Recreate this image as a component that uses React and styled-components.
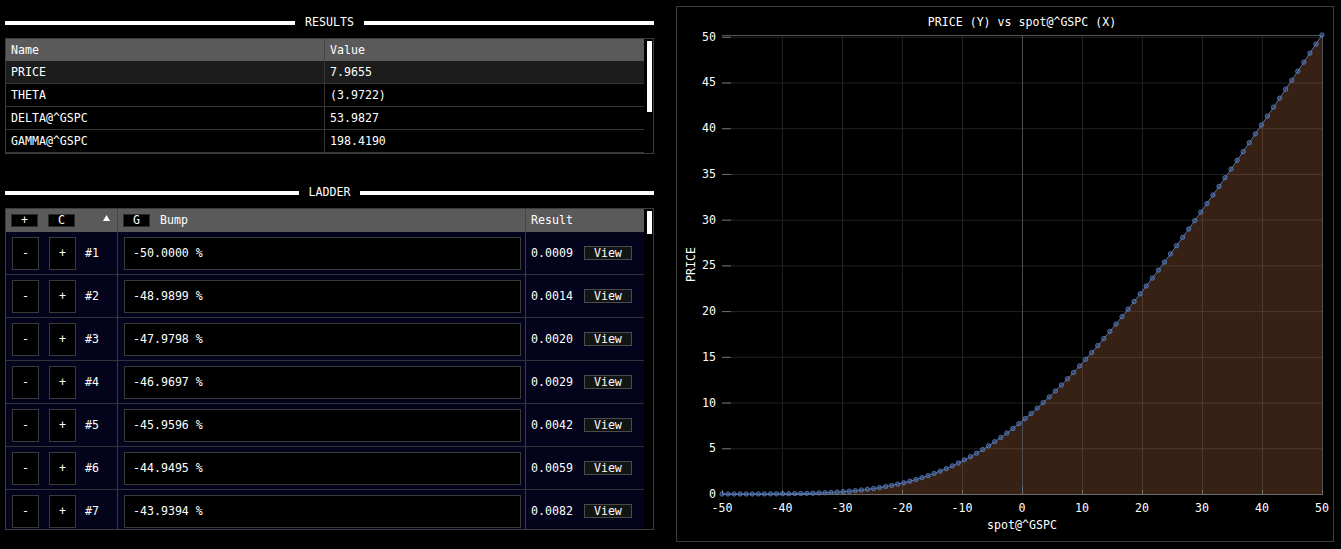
import React from 'react';
import styled, { createGlobalStyle } from 'styled-components';

const GlobalStyle = createGlobalStyle`
  html, body {
    margin: 0;
    background: #000;
  }
  body {
    font-family: "DejaVu Sans Mono", "Liberation Mono", monospace;
    font-size: 11.6px;
    line-height: 13px;
    color: #fff;
  }
`;

const S = {
  Page: styled.div`
    display: flex;
    align-items: flex-start;
    gap: 22px;
    padding: 6px 0 0 5px;
  `,
  LeftCol: styled.div`
    width: 649px;
    padding-top: 10px;
    display: flex;
    flex-direction: column;
  `,
  Separator: styled.div`
    display: flex;
    align-items: center;
    gap: 10px;
    height: 13px;
    margin-top: ${p => p.$top || 0}px;
    margin-bottom: 9px;
    &::before,
    &::after {
      content: '';
      flex: 1;
      height: 4px;
      background: #fff;
    }
  `,
  Frame: styled.div`
    box-sizing: border-box;
    height: ${p => p.$height}px;
    border: 1px solid #3c3c3c;
    display: flex;
    overflow: hidden;
  `,
  Table: styled.div`
    width: 638px;
    display: flex;
    flex-direction: column;
  `,
  Track: styled.div`
    width: 9px;
    padding: 2px 0 0 3px;
    box-sizing: border-box;
  `,
  Thumb: styled.div`
    width: 5px;
    height: ${p => p.$height}px;
    background: #fff;
  `,
  ResHead: styled.div`
    display: grid;
    grid-template-columns: 319px 1fr;
    height: 22px;
    background: #5a5a5a;
  `,
  ResRow: styled.div`
    display: grid;
    grid-template-columns: 319px 1fr;
    height: 23px;
    box-sizing: border-box;
    border-bottom: 1px solid #353535;
    background: ${p => (p.$active ? '#1c1c1c' : '#000')};
  `,
  ResCell: styled.div`
    padding: 1px 0 0 5px;
    display: flex;
    align-items: center;
    white-space: pre;
    &:first-child {
      border-right: 1px solid ${p => (p.$head ? '#454545' : '#353535')};
    }
  `,
  LadHead: styled.div`
    display: grid;
    grid-template-columns: 112px 408px 1fr;
    height: 23px;
    flex-shrink: 0;
    background: #5a5a5a;
  `,
  LadRow: styled.div`
    display: grid;
    grid-template-columns: 112px 408px 1fr;
    height: 43px;
    flex-shrink: 0;
    box-sizing: border-box;
    border-bottom: 1px solid #33333d;
    background: #03031b;
  `,
  Cell: styled.div`
    display: flex;
    align-items: center;
    gap: ${p => p.$gap || 0}px;
    padding: ${p => p.$pad || '0 0 0 5px'};
    border-right: ${p => (p.$last ? 'none' : `1px solid ${p.$head ? '#454545' : '#3a3a3a'}`)};
    min-width: 0;
  `,
  HeadButton: styled.button`
    box-sizing: border-box;
    width: 27px;
    height: 13px;
    padding: 0;
    border: 1px solid #2c2c2c;
    background: #000;
    color: #fff;
    font: inherit;
    line-height: 11px;
  `,
  SortArrow: styled.svg`
    margin-left: auto;
    margin-right: 7px;
    margin-bottom: 6px;
  `,
  RowButton: styled.button`
    box-sizing: border-box;
    width: 27px;
    height: 33px;
    padding: 0;
    border: 1px solid #3a3a3a;
    background: #000;
    color: #fff;
    font: inherit;
  `,
  Index: styled.span`
    margin-left: -1px;
  `,
  Field: styled.input`
    box-sizing: border-box;
    width: 100%;
    height: 33px;
    margin: 0;
    padding: 0 0 0 8px;
    border: 1px solid #3a3a3a;
    background: #000;
    color: #fff;
    font: inherit;
    outline: none;
  `,
  ViewButton: styled.button`
    box-sizing: border-box;
    width: 48px;
    height: 14px;
    margin-left: 11px;
    padding: 0;
    border: 1px solid #4a4a4a;
    background: #141414;
    color: #fff;
    font: inherit;
    line-height: 12px;
  `,
  ChartPanel: styled.div`
    box-sizing: border-box;
    width: 658px;
    height: 536px;
    border: 1px solid #3c3c3c;
    display: flex;
    flex-direction: column;
  `,
  ChartTitle: styled.div`
    margin-top: 9px;
    padding-left: 34px;
    text-align: center;
    white-space: pre;
  `,
  ChartBody: styled.div`
    display: flex;
    align-items: center;
  `,
  YLabel: styled.div`
    width: 13px;
    margin: 0 0 20px 8px;
    writing-mode: vertical-rl;
    transform: rotate(180deg);
  `,
  Plot: styled.svg`
    display: block;
    margin-left: 2px;
    font-family: "DejaVu Sans Mono", "Liberation Mono", monospace;
    font-size: 11.6px;
  `,
  XLabel: styled.div`
    padding-left: 34px;
    text-align: center;
  `,
};

const results = [
  { name: 'PRICE', value: '7.9655', active: true },
  { name: 'THETA', value: '(3.9722)' },
  { name: 'DELTA@^GSPC', value: '53.9827' },
  { name: 'GAMMA@^GSPC', value: '198.4190' },
];

const ladderResults = ['0.0009', '0.0014', '0.0020', '0.0029', '0.0042', '0.0059', '0.0082'];
const ladder = ladderResults.map((res, i) => ({
  id: i + 1,
  bump: (-50 + (i * 100) / 99).toFixed(4),
  res,
}));

// black-scholes call, spot bumped by x %, atm strike, vol*sqrt(t) = 0.2
const erf = x => {
  const s = Math.sign(x);
  const a = Math.abs(x);
  const t = 1 / (1 + 0.3275911 * a);
  const y = 1 - (((((1.061405429 * t - 1.453152027) * t) + 1.421413741) * t - 0.284496736) * t + 0.254829592) * t * Math.exp(-a * a);
  return s * y;
};
const ncdf = x => 0.5 * (1 + erf(x / Math.SQRT2));
const callPrice = bump => {
  const spot = 100 * (1 + bump / 100);
  const v = 0.2;
  const d1 = Math.log(spot / 100) / v + v / 2;
  return spot * ncdf(d1) - 100 * ncdf(d1 - v);
};

const points = Array.from({ length: 100 }, (_, i) => {
  const x = -50 + (i * 100) / 99;
  return { x, y: callPrice(x) };
});

const PL = 22;
const PT = 6;
const PW = 600;
const PH = 459;
const yMin = Math.min(...points.map(p => p.y));
const yMax = Math.max(...points.map(p => p.y));
const px = x => PL + ((x + 50) / 100) * PW;
const py = y => PT + PH - ((y - yMin) / (yMax - yMin)) * PH;
const bottom = PT + PH;

const xTicks = [-50, -40, -30, -20, -10, 0, 10, 20, 30, 40, 50];
const yTicks = [0, 5, 10, 15, 20, 25, 30, 35, 40, 45, 50];

const Chart = () => {
  const line = points.map(p => `${px(p.x).toFixed(1)},${py(p.y).toFixed(1)}`).join(' ');
  const area = `${px(-50)},${py(0)} ${line} ${px(50)},${py(0)}`;
  return (
    <S.Plot width="632" height="490">
      {xTicks.slice(1, -1).map(t => (
        <line key={`gx${t}`} x1={px(t) + 0.5} x2={px(t) + 0.5} y1={PT} y2={bottom} stroke="#222" />
      ))}
      {yTicks.slice(1).map(t => (
        <line key={`gy${t}`} x1={PL} x2={PL + PW} y1={py(t) + 0.5} y2={py(t) + 0.5} stroke="#222" />
      ))}
      <polygon points={area} fill="rgba(221,132,82,0.25)" />
      <line x1={px(0) + 0.5} x2={px(0) + 0.5} y1={PT} y2={bottom} stroke="#4e4e4e" />
      <line x1={px(0) + 0.5} x2={px(0) + 0.5} y1={bottom - 7} y2={bottom} stroke="#4c72b0" />
      <line x1={PL} x2={PL + PW} y1={PT + 0.5} y2={PT + 0.5} stroke="#555" />
      <line x1={PL + PW + 0.5} x2={PL + PW + 0.5} y1={PT} y2={bottom} stroke="#555" />
      <line x1={PL} x2={PL + PW + 1} y1={bottom + 0.5} y2={bottom + 0.5} stroke="#6a6a6a" />
      {yTicks.map(t => (
        <g key={`ty${t}`}>
          <line x1={PL} x2={PL + 9} y1={py(t) + 0.5} y2={py(t) + 0.5} stroke="#6e6e6e" />
          <text x={PL - 6} y={py(t) + 4} textAnchor="end" fill="#fff">{t}</text>
        </g>
      ))}
      {xTicks.map(t => (
        <g key={`tx${t}`}>
          <line x1={px(t) + 0.5} x2={px(t) + 0.5} y1={bottom - 4} y2={bottom} stroke="#6e6e6e" />
          <text x={px(t)} y={bottom + 18} textAnchor="middle" fill="#fff">{t}</text>
        </g>
      ))}
      <polyline points={line} fill="none" stroke="#4c72b0" strokeWidth="1" />
      {points.map((p, i) => (
        <circle
          key={i}
          cx={px(p.x)}
          cy={py(p.y)}
          r="2.2"
          fill="rgba(76,114,176,0.45)"
          stroke="#5a80c2"
          strokeWidth="0.8"
        />
      ))}
    </S.Plot>
  );
};

const App = () => (
  <>
    <GlobalStyle />
    <S.Page>
      <S.LeftCol>
        <S.Separator>RESULTS</S.Separator>
        <S.Frame $height={116}>
          <S.Table>
            <S.ResHead>
              <S.ResCell $head>Name</S.ResCell>
              <S.ResCell $head>Value</S.ResCell>
            </S.ResHead>
            {results.map(r => (
              <S.ResRow key={r.name} $active={r.active}>
                <S.ResCell>{r.name}</S.ResCell>
                <S.ResCell>{r.value}</S.ResCell>
              </S.ResRow>
            ))}
          </S.Table>
          <S.Track>
            <S.Thumb $height={71} />
          </S.Track>
        </S.Frame>

        <S.Separator $top={32}>LADDER</S.Separator>
        <S.Frame $height={322}>
          <S.Table>
            <S.LadHead>
              <S.Cell $head $gap={10}>
                <S.HeadButton>+</S.HeadButton>
                <S.HeadButton>C</S.HeadButton>
                <S.SortArrow width="7" height="6" viewBox="0 0 7 6">
                  <polygon points="3.5,0 7,6 0,6" fill="#fff" />
                </S.SortArrow>
              </S.Cell>
              <S.Cell $head $gap={10}>
                <S.HeadButton>G</S.HeadButton>
                <span>Bump</span>
              </S.Cell>
              <S.Cell $head $last>Result</S.Cell>
            </S.LadHead>
            {ladder.map(row => (
              <S.LadRow key={row.id}>
                <S.Cell $gap={10} $pad="0 0 0 6px">
                  <S.RowButton>-</S.RowButton>
                  <S.RowButton>+</S.RowButton>
                  <S.Index>#{row.id}</S.Index>
                </S.Cell>
                <S.Cell $pad="0 4px 0 6px">
                  <S.Field readOnly value={`${row.bump} %`} />
                </S.Cell>
                <S.Cell $last>
                  <span>{row.res}</span>
                  <S.ViewButton>View</S.ViewButton>
                </S.Cell>
              </S.LadRow>
            ))}
          </S.Table>
          <S.Track>
            <S.Thumb $height={23} />
          </S.Track>
        </S.Frame>
      </S.LeftCol>

      <S.ChartPanel>
        <S.ChartTitle>PRICE (Y) vs spot@^GSPC (X)</S.ChartTitle>
        <S.ChartBody>
          <S.YLabel>PRICE</S.YLabel>
          <Chart />
        </S.ChartBody>
        <S.XLabel>spot@^GSPC</S.XLabel>
      </S.ChartPanel>
    </S.Page>
  </>
);

export default App;
